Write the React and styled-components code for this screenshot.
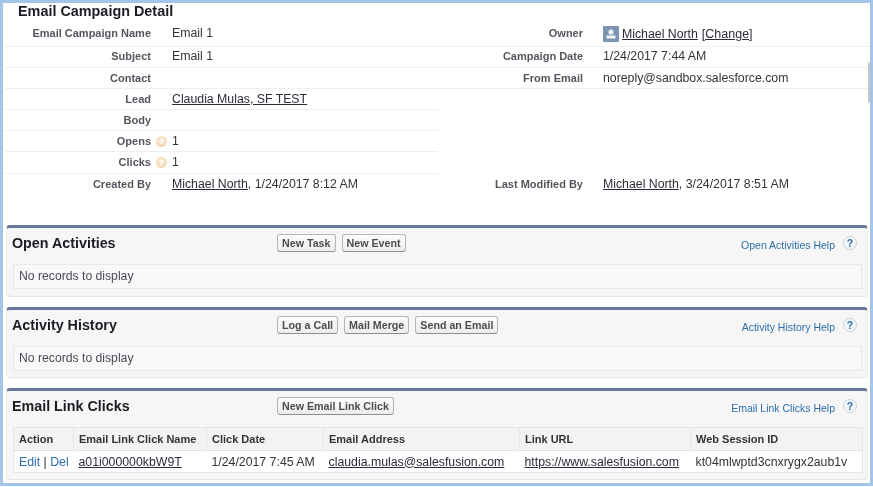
import React from 'react'
import styled, { createGlobalStyle } from 'styled-components'

const GlobalStyle = createGlobalStyle`
  html, body {
    margin: 0;
    padding: 0;
    background: #fff;
  }
  body {
    font-family: "Liberation Sans", Arial, sans-serif;
    font-size: 11px;
    color: #2a2a30;
  }
`

const Frame = styled.div`
  position: relative;
  box-sizing: border-box;
  width: 873px;
  height: 486px;
  border: 3px solid #a3c6e8;
  padding: 0 0 3px 0;
  filter: blur(0.45px);
`

const Scrollbar = styled.div`
  position: absolute;
  top: 59px;
  right: 0;
  width: 2px;
  height: 41px;
  background: #c4c6c8;
  border-radius: 2px 0 0 2px;
`

const PageTitle = styled.h2`
  margin: 0;
  padding: 0 0 0 15px;
  height: 19px;
  font-size: 14.4px;
  line-height: 17px;
  font-weight: bold;
  color: #1c1c24;
`

const Detail = styled.div`
  height: 203px;
`

const DetailRow = styled.div`
  display: grid;
  grid-template-columns: 435px 1fr;
  height: ${p => p.$height || 21.2}px;
`

const Field = styled.div`
  display: grid;
  grid-template-columns: ${p => (p.$right ? '145px' : '146px')} 1fr;
  column-gap: ${p => (p.$right ? '20px' : '21px')};
  align-items: start;
  padding-top: ${p => p.$top || 3}px;
  margin-left: ${p => (p.$right ? '0' : '2px')};
  box-sizing: border-box;
  border-bottom: ${p => (p.$line ? '1px solid #efefef' : '0')};
  line-height: 15px;
`

const Label = styled.div`
  display: flex;
  justify-content: flex-end;
  font-weight: bold;
  color: #55555f;
  position: relative;
`

const Value = styled.div`
  display: flex;
  align-items: center;
  font-size: 12.3px;
  color: #33333a;
  white-space: nowrap;
`

const DarkLink = styled.a`
  color: #2c2c3a;
  text-decoration: underline;
`

const ChangeLink = styled(DarkLink)`
  margin-left: 4px;
  font-size: 12.5px;
`

const BlueLink = styled.a`
  color: #2f6eab;
`

const Bubble = styled.span`
  position: absolute;
  top: 2px;
  right: -16px;
  width: 11px;
  height: 11px;
  border-radius: 50%;
  background: radial-gradient(circle at 50% 40%, #fbeedd, #eecfa4);
  color: #fff;
  font-size: 8px;
  line-height: 11px;
  text-align: center;
`

const Avatar = styled.svg`
  width: 16px;
  height: 16px;
  margin-right: 3px;
  flex: none;
`

const Panels = styled.div`
  display: flex;
  flex-direction: column;
  gap: 10px;
  padding: 0 2px 0 3px;
`

const Panel = styled.section`
  box-sizing: border-box;
  height: ${p => p.$height}px;
  background: #f6f6f6;
  border-top: 3px solid #68789a;
  border-right: 1px solid #ececec;
  border-bottom: 1px solid #e6e6e6;
  border-left: 1px solid #ececec;
  border-radius: 4px;
  padding: 0 5px 0 6px;
`

const PanelHeader = styled.div`
  display: grid;
  grid-template-columns: 264px 1fr auto;
  align-items: center;
  height: 30px;
  margin-bottom: 6px;
`

const PanelTitle = styled.h3`
  margin: 0 0 0 -1px;
  font-size: 14.3px;
  font-weight: bold;
  color: #1c1c24;
`

const Buttons = styled.div`
  display: flex;
  gap: 6px;
`

const Button = styled.button`
  font-family: inherit;
  font-size: 10.7px;
  font-weight: bold;
  color: #4c4c52;
  height: 18px;
  padding: 0 4px;
  background: linear-gradient(#fdfdfd, #ececec);
  border: 1px solid #b6b6b6;
  border-bottom-color: #8f8f8f;
  border-radius: 3px;
  cursor: pointer;
`

const Help = styled.div`
  display: flex;
  align-items: center;
  gap: 8px;
  margin-right: 5px;
`

const HelpLink = styled(BlueLink)`
  font-size: 10.5px;
  position: relative;
  top: 2px;
`

const HelpIcon = styled.span`
  width: 14px;
  height: 14px;
  box-sizing: border-box;
  border: 1px solid #c8d4e0;
  border-radius: 50%;
  background: #f3f6f9;
  color: #2f6eab;
  font-size: 10.5px;
  font-weight: bold;
  line-height: 12px;
  text-align: center;
`

const EmptyBox = styled.div`
  box-sizing: border-box;
  height: 25px;
  padding-left: 5px;
  background: #f8f8f8;
  border: 1px solid #e8e8e8;
  color: #4e4a5a;
  line-height: 23px;
  font-size: 12.2px;
`

const Table = styled.table`
  width: 849px;
  border-collapse: collapse;
  table-layout: fixed;
  border: 1px solid #e6e6e6;
`

const Th = styled.th`
  height: 22px;
  padding: 0 0 0 5px;
  text-align: left;
  font-size: 11px;
  font-weight: bold;
  color: #33333a;
  background: #f2f3f3;
  border-right: 1px solid #e6e6e6;
  border-bottom: 1px solid #e2e2e2;
  &:last-child { border-right: 0; }
`

const Td = styled.td`
  height: 21px;
  padding: 0 0 0 5px;
  font-size: 12.3px;
  background: #fff;
  color: #33333a;
  white-space: nowrap;
  overflow: hidden;
`

const rows = [
  { height: 24.5, top: 4, left: ['Email Campaign Name', 'Email 1'], right: ['Owner', 'owner'] },
  { top: 2, left: ['Subject', 'Email 1'], right: ['Campaign Date', '1/24/2017 7:44 AM'] },
  { left: ['Contact', ''], right: ['From Email', 'noreply@sandbox.salesforce.com'] },
  { left: ['Lead', 'lead'] },
  { left: ['Body', ''] },
  { left: ['Opens', '1'], bubble: true },
  { left: ['Clicks', '1'], bubble: true },
  { left: ['Created By', 'created'], right: ['Last Modified By', 'modified'], last: true },
]

const renderValue = v => {
  if (v === 'lead') return <DarkLink>Claudia Mulas, SF TEST</DarkLink>
  if (v === 'created') return <span><DarkLink>Michael North</DarkLink>, 1/24/2017 8:12 AM</span>
  if (v === 'modified') return <span><DarkLink>Michael North</DarkLink>, 3/24/2017 8:51 AM</span>
  if (v === 'owner') {
    return <>
      <Avatar viewBox="0 0 16 16">
        <rect width="16" height="16" rx="1" fill="#7d95b2" />
        <circle cx="8" cy="6" r="2.6" fill="#f2f4f7" />
        <rect x="3.5" y="9.5" width="9" height="3" fill="#f2f4f7" />
      </Avatar>
      <DarkLink>Michael North</DarkLink>
      <ChangeLink>[Change]</ChangeLink>
    </>
  }
  return v
}

const columns = [
  { name: 'Action', width: 60 },
  { name: 'Email Link Click Name', width: 133 },
  { name: 'Click Date', width: 117 },
  { name: 'Email Address', width: 196 },
  { name: 'Link URL', width: 171 },
  { name: 'Web Session ID', width: 172 },
]

const PanelHead = ({ title, buttons, help }) => (
  <PanelHeader>
    <PanelTitle>{title}</PanelTitle>
    <Buttons>
      {buttons.map(b => <Button key={b}>{b}</Button>)}
    </Buttons>
    <Help>
      <HelpLink>{help}</HelpLink>
      <HelpIcon>?</HelpIcon>
    </Help>
  </PanelHeader>
)

const App = () => {
  return <>
    <GlobalStyle />
    <Frame>
      <Scrollbar />
      <PageTitle>Email Campaign Detail</PageTitle>
      <Detail>
        {rows.map(r => (
          <DetailRow key={r.left[0]} $height={r.height}>
            <Field $line={!r.last} $top={r.top}>
              <Label>
                {r.left[0]}
                {r.bubble && <Bubble>?</Bubble>}
              </Label>
              <Value>{renderValue(r.left[1])}</Value>
            </Field>
            {r.right ? (
              <Field $right $line={!r.last} $top={r.top}>
                <Label>{r.right[0]}</Label>
                <Value>{renderValue(r.right[1])}</Value>
              </Field>
            ) : <div />}
          </DetailRow>
        ))}
      </Detail>
      <Panels>
        <Panel $height={71.5}>
          <PanelHead title="Open Activities" buttons={['New Task', 'New Event']} help="Open Activities Help" />
          <EmptyBox>No records to display</EmptyBox>
        </Panel>
        <Panel $height={71.5}>
          <PanelHead title="Activity History" buttons={['Log a Call', 'Mail Merge', 'Send an Email']} help="Activity History Help" />
          <EmptyBox>No records to display</EmptyBox>
        </Panel>
        <Panel $height={92}>
          <PanelHead title="Email Link Clicks" buttons={['New Email Link Click']} help="Email Link Clicks Help" />
          <Table>
            <colgroup>
              {columns.map(c => <col key={c.name} width={c.width} />)}
            </colgroup>
            <thead>
              <tr>
                {columns.map(c => <Th key={c.name}>{c.name}</Th>)}
              </tr>
            </thead>
            <tbody>
              <tr>
                <Td><BlueLink>Edit</BlueLink> | <BlueLink>Del</BlueLink></Td>
                <Td><DarkLink>a01i000000kbW9T</DarkLink></Td>
                <Td>1/24/2017 7:45 AM</Td>
                <Td><DarkLink>claudia.mulas@salesfusion.com</DarkLink></Td>
                <Td><DarkLink>https://www.salesfusion.com</DarkLink></Td>
                <Td>kt04mlwptd3cnxrygx2aub1v</Td>
              </tr>
            </tbody>
          </Table>
        </Panel>
      </Panels>
    </Frame>
  </>
}

export default App
